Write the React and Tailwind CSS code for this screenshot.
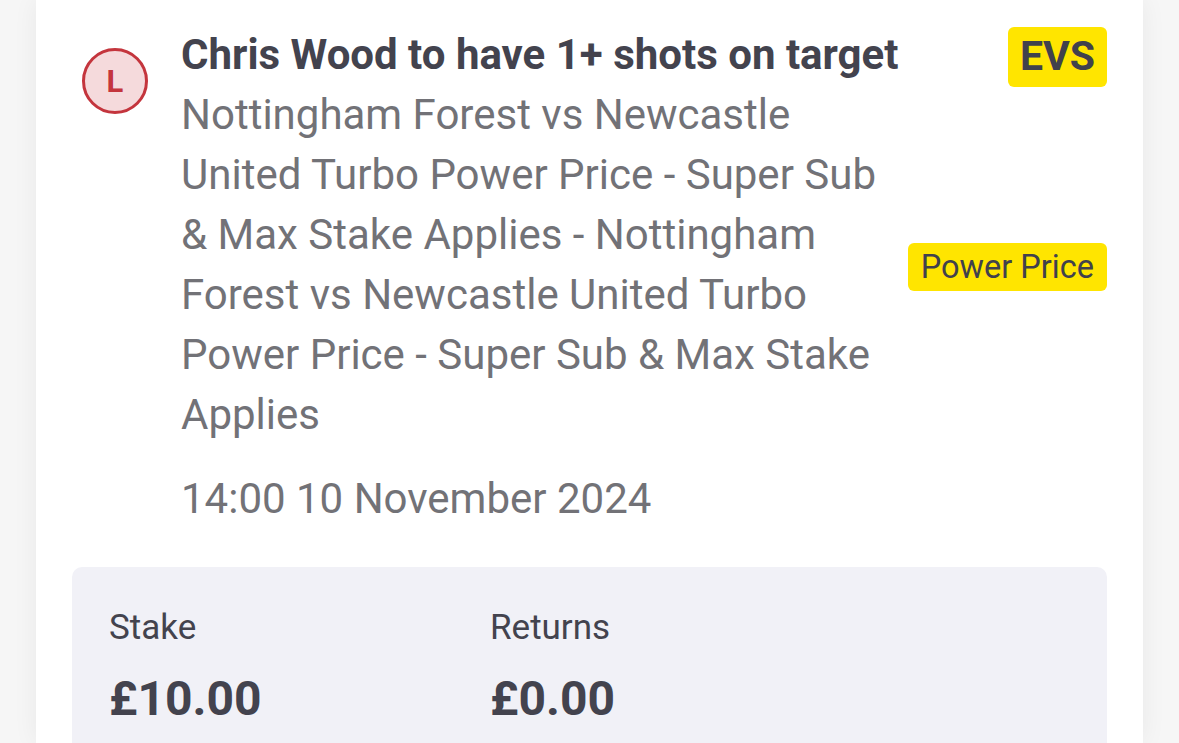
import React from "react";

// Bet slip leg card
function Badge({ children, className }) {
  return (
    <span className={"inline-flex items-center rounded-[6px] bg-[#ffe500] text-[#41414c] " + className}>
      {children}
    </span>
  );
}

export default function App() {
  return (
    <div
      className="w-[1179px] h-[743px] overflow-hidden bg-[#f6f6f6] flex justify-center"
      style={{ fontFamily: "Roboto, 'Noto Sans', sans-serif" }}
    >
      <div className="w-[1107px] bg-white shadow-[0_0_24px_rgba(0,0,0,0.06)] px-[36px] pt-[25px]">
        <div className="flex">
          <div className="w-[109px] shrink-0 pl-[10px] pt-[23px]">
            <div className="w-[66px] h-[66px] rounded-full border-[3px] border-[#c4353d] bg-[#f5dadc] flex items-center justify-center">
              <span className="text-[#c4353d] font-bold text-[31px] leading-none">L</span>
            </div>
          </div>
          <div className="flex-1 min-w-0">
            <div className="text-[42px] font-bold text-[#43434e] leading-[60px] whitespace-nowrap">
              Chris Wood to have 1+ shots on target
            </div>
            <div className="text-[42px] text-[#727277] leading-[60px] w-[712px]">
              Nottingham Forest vs Newcastle United Turbo Power Price - Super Sub &amp; Max Stake Applies - Nottingham Forest vs Newcastle United Turbo Power Price - Super Sub &amp; Max Stake Applies
            </div>
            <div className="text-[42px] text-[#727277] leading-[60px] mt-[24px]">
              14:00 10 November 2024
            </div>
          </div>
          <div className="flex flex-col items-end shrink-0 pt-[2px]">
            <Badge className="h-[60px] px-[12px] text-[41px] font-bold">EVS</Badge>
            <Badge className="h-[48px] px-[13px] text-[32.5px] mt-[156px]">Power Price</Badge>
          </div>
        </div>
        <div className="mt-[38px] rounded-[10px] bg-[#f1f1f7] pl-[37px] pt-[41px] pb-[40px] flex">
          <div className="w-[381px]">
            <div className="text-[35px] text-[#43434e] leading-[40px]">Stake</div>
            <div className="text-[48px] font-bold text-[#43434e] leading-[56px] mt-[23px]">£10.00</div>
          </div>
          <div>
            <div className="text-[35px] text-[#43434e] leading-[40px]">Returns</div>
            <div className="text-[48px] font-bold text-[#43434e] leading-[56px] mt-[23px]">£0.00</div>
          </div>
        </div>
      </div>
    </div>
  );
}
